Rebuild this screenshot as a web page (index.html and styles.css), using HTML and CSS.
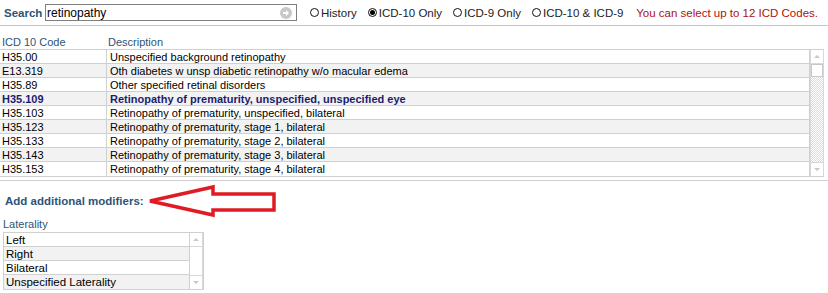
FILE: index.html
```html
<!DOCTYPE html>
<html>
<head>
<meta charset="utf-8">
<link rel="stylesheet" href="styles.css">
</head>
<body>
<div class="topbar">
  <span class="search-label">Search</span>
  <div class="search-box">
    <span class="search-text">retinopathy</span>
    <svg class="go" width="12" height="12" viewBox="0 0 12 12"><circle cx="6" cy="6" r="6" fill="#c8c8c8"/><path d="M3 5h3V3l3 3-3 3V7H3z" fill="#fff"/></svg>
  </div>
  <div class="radios">
    <label class="radio"><span class="dot"></span>History</label>
    <label class="radio"><span class="dot on"></span>ICD-10 Only</label>
    <label class="radio"><span class="dot"></span>ICD-9 Only</label>
    <label class="radio"><span class="dot"></span>ICD-10 &amp; ICD-9</label>
  </div>
  <span class="limit">You can select up to 12 ICD Codes.</span>
</div>

<div class="colhead">
  <span class="c1">ICD 10 Code</span>
  <span class="c2">Description</span>
</div>

<div class="grid">
  <div class="rows">
    <div class="row"><span class="c1">H35.00</span><span class="c2">Unspecified background retinopathy</span></div>
    <div class="row alt"><span class="c1">E13.319</span><span class="c2">Oth diabetes w unsp diabetic retinopathy w/o macular edema</span></div>
    <div class="row"><span class="c1">H35.89</span><span class="c2">Other specified retinal disorders</span></div>
    <div class="row alt sel"><span class="c1">H35.109</span><span class="c2">Retinopathy of prematurity, unspecified, unspecified eye</span></div>
    <div class="row"><span class="c1">H35.103</span><span class="c2">Retinopathy of prematurity, unspecified, bilateral</span></div>
    <div class="row alt"><span class="c1">H35.123</span><span class="c2">Retinopathy of prematurity, stage 1, bilateral</span></div>
    <div class="row"><span class="c1">H35.133</span><span class="c2">Retinopathy of prematurity, stage 2, bilateral</span></div>
    <div class="row alt"><span class="c1">H35.143</span><span class="c2">Retinopathy of prematurity, stage 3, bilateral</span></div>
    <div class="row"><span class="c1">H35.153</span><span class="c2">Retinopathy of prematurity, stage 4, bilateral</span></div>
  </div>
  <div class="vscroll">
    <div class="sbtn up"></div>
    <div class="thumb"></div>
    <div class="track"></div>
    <div class="sbtn down"></div>
  </div>
</div>

<div class="sep"></div>

<div class="modifiers">
  <span class="mod-title">Add additional modifiers:</span>
  <svg class="arrow" width="132" height="34" viewBox="0 0 132 34">
    <path d="M3 17 L66 3 L66 10 L127 10 L127 26 L66 26 L66 31 Z" fill="none" stroke="#e01b24" stroke-width="3.5" stroke-linejoin="miter"/>
  </svg>
</div>

<div class="lat-label">Laterality</div>
<div class="listbox">
  <div class="lrows">
    <div class="lrow">Left</div>
    <div class="lrow alt">Right</div>
    <div class="lrow">Bilateral</div>
    <div class="lrow alt">Unspecified Laterality</div>
  </div>
  <div class="vscroll small">
    <div class="sbtn up"></div>
    <div class="track blank"></div>
    <div class="sbtn down"></div>
  </div>
</div>
</body>
</html>
```
FILE: styles.css
```css
html, body {
  margin: 0;
  padding: 0;
  background: #fff;
}
body {
  font-family: "Liberation Sans", Arial, sans-serif;
  font-size: 11px;
  color: #000;
  width: 828px;
  height: 293px;
  overflow: hidden;
}
.topbar {
  height: 26px;
  border-bottom: 1px solid #c4c4c4;
  display: flex;
  align-items: center;
  box-sizing: border-box;
  padding-left: 4px;
}
.search-label {
  font-weight: bold;
  font-size: 11.5px;
  color: #2d5478;
  width: 41px;
}
.search-box {
  width: 252px;
  height: 17px;
  box-sizing: border-box;
  border: 1px solid #7f7f7f;
  display: flex;
  align-items: center;
  justify-content: space-between;
  padding: 0 4px 0 1px;
}
.search-text { font-size: 12px; }
.go { display: block; }
.radios {
  display: flex;
  margin-left: 13px;
  gap: 11px;
}
.radio {
  display: flex;
  align-items: center;
  color: #222;
  font-size: 11.5px;
}
.dot {
  width: 9px;
  height: 9px;
  border: 1px solid #111;
  border-radius: 50%;
  margin-right: 2px;
  box-sizing: border-box;
  position: relative;
}
.dot.on::after {
  content: "";
  position: absolute;
  left: 1px; top: 1px;
  width: 5px; height: 5px;
  border-radius: 50%;
  background: #000;
}
.limit {
  margin-left: auto;
  margin-right: 10px;
  color: #b01010;
  font-size: 11.5px;
}
.colhead {
  display: flex;
  height: 22px;
  align-items: flex-end;
  padding-bottom: 1px;
  color: #2d5478;
  font-size: 11px;
}
.colhead .c1 { width: 106px; padding-left: 2px; box-sizing: border-box; }
.colhead .c2 { padding-left: 2px; }
.grid {
  display: flex;
  width: 824px;
  height: 128px;
  border-top: 1px solid #d0d0d0;
  border-bottom: 1px solid #d0d0d0;
  box-sizing: border-box;
}
.rows { flex: 1; }
.row {
  display: flex;
  height: 14px;
  box-sizing: border-box;
  border-bottom: 1px solid #d0d0d0;
  line-height: 14px;
}
.row:last-child { border-bottom: none; }
.row.alt { background: #f2f2f2; }
.row .c1 {
  width: 107px;
  padding-left: 2px;
  box-sizing: border-box;
  border-right: 1px solid #d0d0d0;
}
.row .c2 {
  flex: 1;
  padding-left: 3px;
  border-right: 1px solid #d0d0d0;
}
.row.sel { font-weight: bold; color: #1c1c6e; }
.vscroll {
  width: 12px;
  display: flex;
  flex-direction: column;
  border-left: 1px solid #d8d8d8;
  border-right: 1px solid #d8d8d8;
}
.sbtn {
  height: 13px;
  background: #fff;
  position: relative;
}
.sbtn.up { border-bottom: 1px solid #d8d8d8; }
.sbtn.down { border-top: 1px solid #d8d8d8; }
.sbtn.up::after, .sbtn.down::after {
  content: "";
  position: absolute;
  left: 3px;
  top: 5px;
  border-left: 3px solid transparent;
  border-right: 3px solid transparent;
}
.sbtn.up::after { border-bottom: 3px solid #c8c8c8; }
.sbtn.down::after { border-top: 3px solid #c8c8c8; }
.thumb {
  height: 11px;
  border: 1px solid #c8c8c8;
  background: #fff;
}
.track {
  flex: 1;
  background-color: #fff;
  background-image: conic-gradient(#dcdcdc 25%, #fff 0 50%, #dcdcdc 0 75%, #fff 0);
  background-size: 2px 2px;
}
.track.blank { background-image: none; }
.sep {
  width: 828px;
  height: 0;
  border-top: 1px solid #d0d0d0;
  margin-top: 3px;
}
.modifiers {
  display: flex;
  align-items: center;
  height: 37px;
  padding-left: 5px;
}
.mod-title {
  font-weight: bold;
  font-size: 11.5px;
  color: #2d5478;
  width: 142px;
  margin-top: 3px;
}
.arrow { margin-top: 2px; }
.lat-label {
  padding-left: 3px;
  color: #2d5478;
  height: 14px;
  line-height: 12px;
}
.listbox {
  display: flex;
  margin-left: 3px;
  width: 201px;
  border: 1px solid #d0d0d0;
  box-sizing: border-box;
}
.lrows { flex: 1; }
.lrow {
  height: 14px;
  box-sizing: border-box;
  border-bottom: 1px solid #d0d0d0;
  border-right: 1px solid #d0d0d0;
  padding-left: 2px;
  line-height: 14px;
  font-size: 11.5px;
}
.lrow:last-child { border-bottom: none; }
.lrow.alt { background: #f2f2f2; }
.vscroll.small { border-left: none; }
```
